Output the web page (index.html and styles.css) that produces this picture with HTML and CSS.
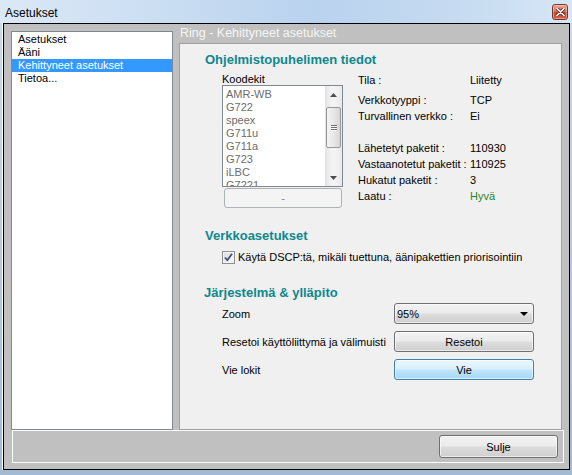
FILE: index.html
```html
<!DOCTYPE html>
<html lang="fi">
<head>
<meta charset="utf-8">
<title>Asetukset</title>
<link rel="stylesheet" href="styles.css">
</head>
<body>
<div class="window">
  <div class="titlebar">
    <span class="title">Asetukset</span>
    <span class="close">
      <svg width="9" height="8" viewBox="0 0 9 8"><path d="M1 0.5 L8 7.5 M8 0.5 L1 7.5" stroke="#5a2418" stroke-width="3.2" stroke-linecap="round"/><path d="M1 0.5 L8 7.5 M8 0.5 L1 7.5" stroke="#ffffff" stroke-width="1.6" stroke-linecap="round"/></svg>
    </span>
  </div>
  <div class="client">
    <div class="main">
      <ul class="nav">
        <li>Asetukset</li>
        <li>Ääni</li>
        <li class="selected">Kehittyneet asetukset</li>
        <li>Tietoa...</li>
      </ul>
      <section class="page">
        <div class="page-title">Ring - Kehittyneet asetukset</div>
        <div class="panel">
          <h2 class="heading h-info">Ohjelmistopuhelimen tiedot</h2>
          <div class="info">
            <div class="codecs">
              <div class="codecs-label">Koodekit</div>
              <div class="listbox">
                <ul class="codec-items">
                  <li>AMR-WB</li>
                  <li>G722</li>
                  <li>speex</li>
                  <li>G711u</li>
                  <li>G711a</li>
                  <li>G723</li>
                  <li>iLBC</li>
                  <li>G7221</li>
                </ul>
                <div class="scrollbar">
                  <div class="sb-btn"><svg width="7" height="4" viewBox="0 0 7 4"><path d="M0 4 L3.5 0 L7 4 Z" fill="#4d4d4d"/></svg></div>
                  <div class="sb-track"><div class="sb-thumb"><span class="grip"></span><span class="grip"></span><span class="grip"></span></div></div>
                  <div class="sb-btn"><svg width="7" height="4" viewBox="0 0 7 4"><path d="M0 0 L7 0 L3.5 4 Z" fill="#4d4d4d"/></svg></div>
                </div>
              </div>
              <div class="btn btn-disabled btn-minus">-</div>
            </div>
            <div class="stats">
              <div class="stat"><span class="k">Tila :</span><span class="v">Liitetty</span></div>
              <div class="stat s-gap4"><span class="k">Verkkotyyppi :</span><span class="v">TCP</span></div>
              <div class="stat"><span class="k">Turvallinen verkko :</span><span class="v">Ei</span></div>
              <div class="stat s-gap16"><span class="k">Lähetetyt paketit :</span><span class="v">110930</span></div>
              <div class="stat"><span class="k">Vastaanotetut paketit :</span><span class="v">110925</span></div>
              <div class="stat"><span class="k">Hukatut paketit :</span><span class="v">3</span></div>
              <div class="stat"><span class="k">Laatu :</span><span class="v good">Hyvä</span></div>
            </div>
          </div>
          <h2 class="heading h-net">Verkkoasetukset</h2>
          <div class="check-row">
            <span class="checkbox"><svg width="11" height="11" viewBox="0 0 11 11"><path d="M2 5.5 L4.3 8.2 L9 1.8" fill="none" stroke="#3b4f85" stroke-width="1.8" stroke-linejoin="round"/></svg></span>
            <span>Käytä DSCP:tä, mikäli tuettuna, äänipakettien priorisointiin</span>
          </div>
          <h2 class="heading h-sys">Järjestelmä &amp; ylläpito</h2>
          <div class="form">
            <span class="f-label">Zoom</span>
            <div class="combo"><span>95%</span><svg width="8" height="4" viewBox="0 0 8 4"><path d="M0 0 L8 0 L4 4 Z" fill="#000"/></svg></div>
            <span class="f-label">Resetoi käyttöliittymä ja välimuisti</span>
            <div class="btn">Resetoi</div>
            <span class="f-label">Vie lokit</span>
            <div class="btn btn-hot">Vie</div>
          </div>
        </div>
      </section>
    </div>
    <div class="footer">
      <div class="btn btn-close">Sulje</div>
    </div>
  </div>
</div>
</body>
</html>
```
FILE: styles.css
```css
* { box-sizing: border-box; }
html, body { margin: 0; padding: 0; }
body {
  width: 572px;
  height: 475px;
  overflow: hidden;
  background: linear-gradient(#c9dcf1, #a3bad3);
  font-family: "Liberation Sans", Arial, sans-serif;
  font-size: 11px;
  color: #000;
}
ul { list-style: none; margin: 0; padding: 0; }
h2 { margin: 0; }

.window { display: flex; flex-direction: column; height: 475px; }

.titlebar {
  height: 23px;
  display: flex;
  align-items: flex-start;
  padding: 0 4px 0 5px;
  background: linear-gradient(to right, #dbe8f6 0%, #c9ddf2 30%, #b9d2ee 55%, #c6dbf1 80%, #d6e6f5 100%);
}
.title { flex: 1; font-size: 12px; line-height: 12px; padding-top: 7px; }
.close {
  margin-top: 4px;
  width: 16px;
  height: 16px;
  border: 1px solid #7b3527;
  border-radius: 3px;
  background: linear-gradient(#e9a690 0%, #d9765c 45%, #c4442b 55%, #d0654a 100%);
  box-shadow: inset 0 0 0 1px rgba(255,255,255,0.35);
  display: flex;
  align-items: center;
  justify-content: center;
}

.client {
  flex: 1;
  margin: 0 2px 5px 3px;
  border: 1px solid #000;
  box-shadow: -1px 0 0 #fff;
  background: #c0c0c0;
  display: flex;
  flex-direction: column;
}

.main { display: flex; height: 406px; padding: 0 7px 0 7px; gap: 6px; }

.nav {
  width: 162px;
  margin-top: 7px;
  border: 1px solid #828790;
  background: #fff;
  padding-top: 1px;
}
.nav li { height: 13px; line-height: 13px; padding-left: 6px; }
.nav li.selected { background: #3399ff; color: #fff; }

.page { flex: 1; display: flex; flex-direction: column; }
.page-title {
  height: 19px;
  line-height: 19px;
  padding-left: 1px;
  font-size: 12.5px;
  color: #f6f6f6;
}
.panel {
  flex: 1;
  border: 1px solid #a0a0a0;
  background: #f0f0f0;
}

.heading {
  font-size: 13px;
  font-weight: bold;
  line-height: 16px;
  color: #0f878c;
  padding-left: 25px;
}
.h-info { margin-top: 8px; }
.h-net { margin-top: 20px; }
.h-sys { margin-top: 20px; padding-left: 24px; }

.info { display: flex; margin-top: 4px; padding-left: 42px; gap: 15px; }
.codecs { width: 121px; padding-top: 1px; }
.codecs-label { height: 12px; line-height: 12px; }
.listbox {
  height: 102px;
  border: 1px solid #828790;
  background: #fff;
  display: flex;
  overflow: hidden;
}
.codec-items { flex: 1; padding: 2px 0 0 3px; overflow: hidden; }
.codec-items li { height: 13px; line-height: 13px; color: #6d6d6d; }
.scrollbar {
  width: 17px;
  display: flex;
  flex-direction: column;
  background: linear-gradient(to right, #e4e4e4, #f3f3f3 40%, #f3f3f3 60%, #e9e9e9);
}
.sb-btn { height: 17px; display: flex; align-items: center; justify-content: center; }
.sb-track { flex: 1; padding-top: 4px; }
.sb-thumb {
  margin: 0 1px;
  height: 41px;
  border: 1px solid #979797;
  border-radius: 2px;
  background: linear-gradient(to right, #f4f4f4, #e8e8e8 50%, #d6d6d6);
  display: flex;
  flex-direction: column;
  align-items: center;
  justify-content: center;
  gap: 1px;
}
.grip { display: block; width: 6px; height: 1px; background: #6f6f6f; box-shadow: 0 1px 0 #fff; }

.stats { padding-top: 0; }
.stat { display: flex; height: 16px; line-height: 16px; }
.stat .k { width: 112px; white-space: nowrap; }
.stat .v { white-space: nowrap; }
.s-gap4 { margin-top: 4px; }
.s-gap16 { margin-top: 16px; }
.good { color: #27862c; }

.check-row {
  display: flex;
  align-items: center;
  height: 16px;
  margin-top: 5px;
  padding-left: 42px;
  gap: 3px;
}
.checkbox {
  width: 13px;
  height: 13px;
  border: 1px solid #8e8f8f;
  background: linear-gradient(135deg, #dcdcdc, #fbfbfb);
  box-shadow: inset 0 0 0 1px #f4f4f4;
  display: flex;
  align-items: center;
  justify-content: center;
}

.form {
  display: grid;
  grid-template-columns: 172px 140px;
  grid-auto-rows: 21px;
  row-gap: 7px;
  margin-top: 2px;
  padding-left: 42px;
  align-items: center;
}
.f-label { line-height: 16px; white-space: nowrap; }

.btn {
  height: 21px;
  border: 1px solid #707070;
  border-radius: 3px;
  background: linear-gradient(#f2f2f2 0%, #ebebeb 49%, #dddddd 51%, #cfcfcf 100%);
  box-shadow: inset 0 0 0 1px rgba(255,255,255,0.6);
  display: flex;
  align-items: center;
  justify-content: center;
}
.btn-hot {
  border-color: #3c7fb1;
  background: linear-gradient(#eaf6fd 0%, #d9f0fc 49%, #bee6fd 51%, #a7d9f5 100%);
}
.btn-disabled {
  border-color: #adb2b5;
  background: #f4f4f4;
  color: #838383;
  box-shadow: none;
}
.btn.btn-minus { margin: 1px 1px 0 2px; height: 20px; }
.combo {
  height: 21px;
  border: 1px solid #707070;
  border-radius: 3px;
  background: linear-gradient(#f2f2f2 0%, #ebebeb 49%, #dddddd 51%, #cfcfcf 100%);
  box-shadow: inset 0 0 0 1px rgba(255,255,255,0.6);
  display: flex;
  align-items: center;
  justify-content: space-between;
  padding: 0 5px 0 2px;
}

.footer {
  height: 33px;
  margin: 0 5px 6px 8px;
  border: 1px solid #fbfbfb;
  display: flex;
  align-items: center;
  justify-content: flex-end;
  padding-right: 5px;
}
.btn.btn-close { width: 119px; height: 23px; }
```
